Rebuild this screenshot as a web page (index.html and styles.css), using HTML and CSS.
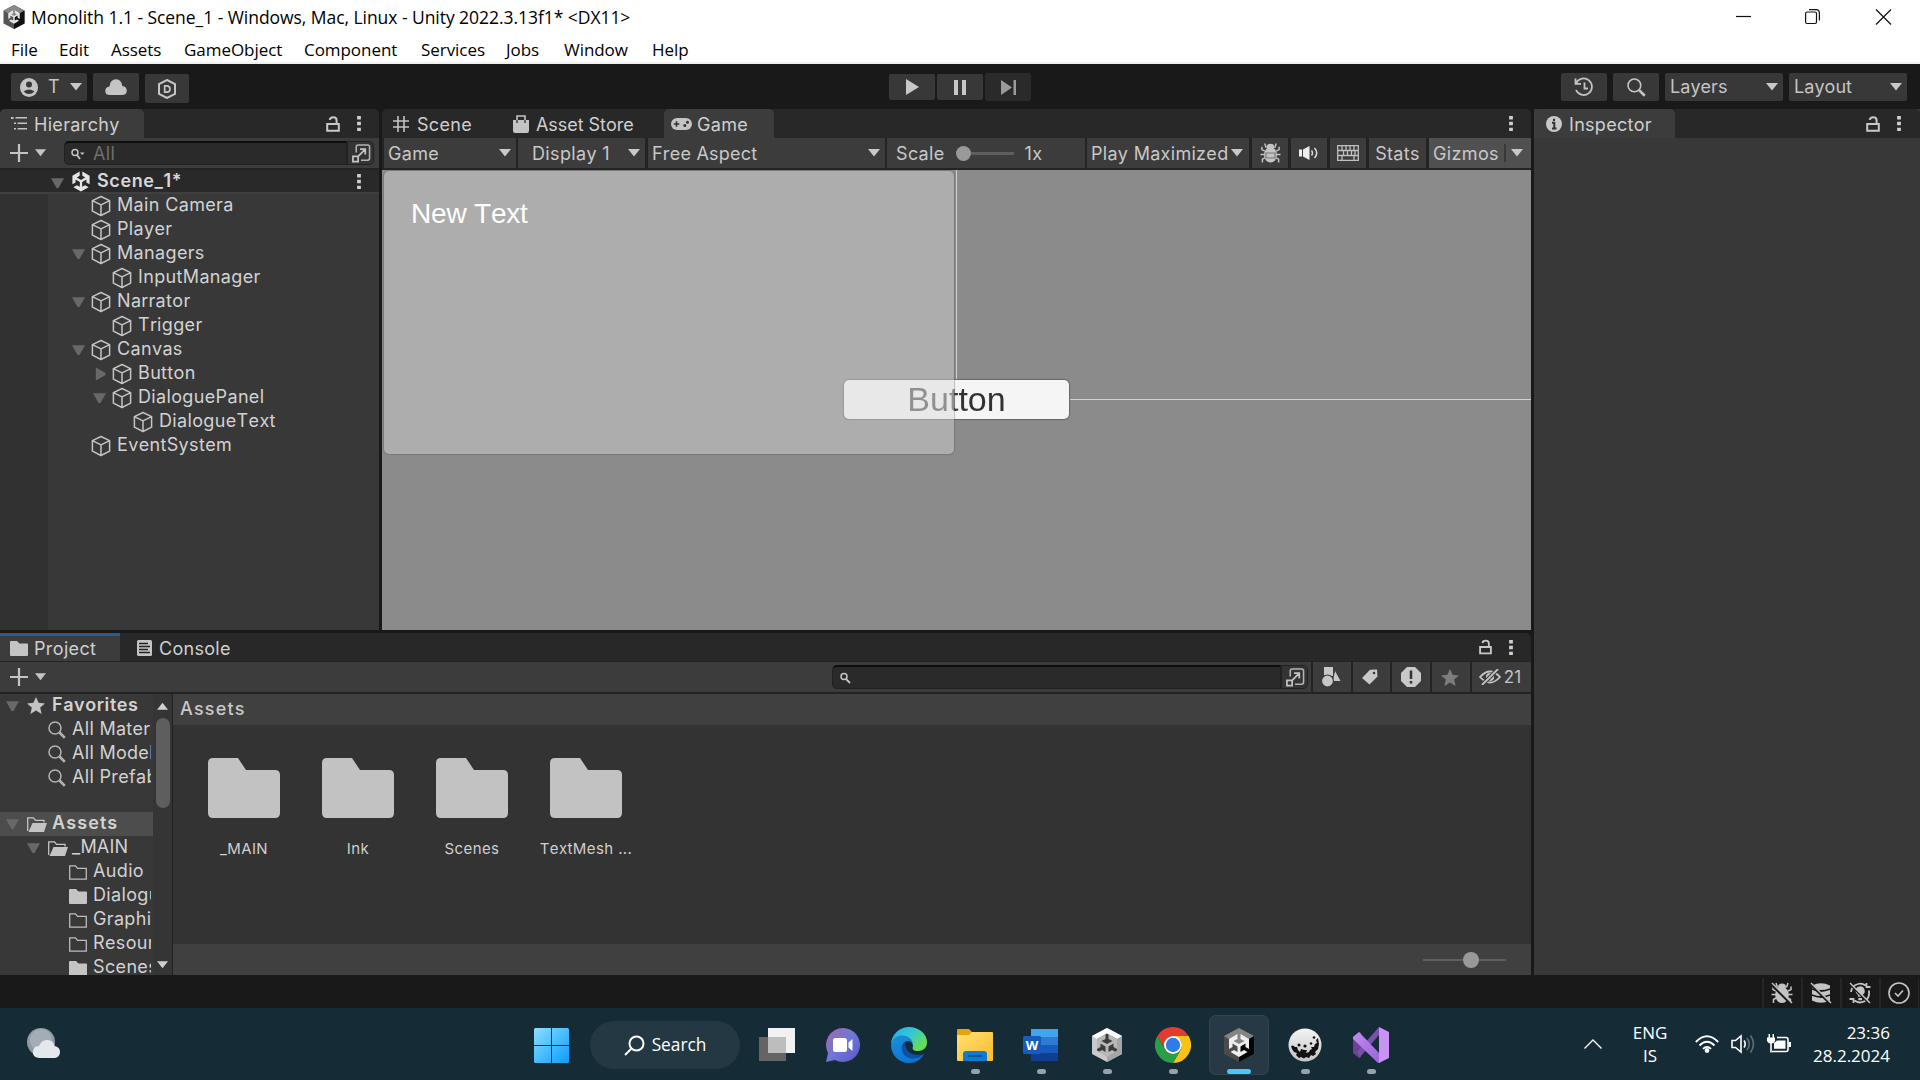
FILE: index.html
```html
<!DOCTYPE html>
<html lang="en">
<head>
<meta charset="utf-8">
<title>Monolith 1.1 - Scene_1</title>
<link rel="stylesheet" href="styles.css">
</head>
<body>
<svg class="defs" width="0" height="0">
  <defs>
    <linearGradient id="gWin" x1="0" y1="0" x2="1" y2="1"><stop offset="0" stop-color="#8be0ff"/><stop offset="1" stop-color="#0a9bff"/></linearGradient>
    <linearGradient id="gChat" x1="0" y1="0" x2="1" y2="1"><stop offset="0" stop-color="#a06aa8"/><stop offset=".5" stop-color="#6f78d8"/><stop offset="1" stop-color="#5b50c8"/></linearGradient>
    <linearGradient id="gEdgeA" x1="0" y1="0" x2="1" y2=".6"><stop offset="0" stop-color="#2aa8e8"/><stop offset=".5" stop-color="#33c5d8"/><stop offset="1" stop-color="#66e052"/></linearGradient>
    <linearGradient id="gEdgeB" x1="0" y1="0" x2=".6" y2="1"><stop offset="0" stop-color="#1b8fd8"/><stop offset="1" stop-color="#0a74d4"/></linearGradient>
    <linearGradient id="gFold" x1="0" y1="0" x2="1" y2="1"><stop offset="0" stop-color="#ffdf78"/><stop offset="1" stop-color="#fdbb27"/></linearGradient>
    <linearGradient id="gVs" x1="0" y1="0" x2="1" y2="1"><stop offset="0" stop-color="#c08cf0"/><stop offset="1" stop-color="#9a63d8"/></linearGradient>
    <linearGradient id="gBall" x1="0" y1="0" x2="0" y2="1"><stop offset="0" stop-color="#f4f4f4"/><stop offset="1" stop-color="#c4c4c4"/></linearGradient>
  </defs>
  <symbol id="cube" viewBox="0 0 20 22"><path d="M10 1.5 18.6 5.6V16.2L10 20.5 1.4 16.2V5.6ZM1.4 5.6 10 9.8 18.6 5.6M10 9.8V20.5" fill="none" stroke="#c4c4c4" stroke-width="1.5" stroke-linejoin="round"/></symbol>
  <symbol id="unity" viewBox="0 0 20 22"><path d="M8.6 0.5V5L5.6 6.8 10 9.4 14.4 6.8 11.4 5V0.5L19 5V14L15.7 12V8.8L11.2 11.5V16.6L14.3 14.8 18 17 10 21.5 2 17 5.7 14.8 8.8 16.6V11.5L4.3 8.8V12L1 14V5Z" fill="#e6e6e6"/></symbol>
  <symbol id="lock" viewBox="0 0 14 16"><path d="M1.2 8H12.8V14.8H1.2ZM10.6 8V4.2Q10.6 1.2 7.3 1.2 4 1.2 3.8 3.8" fill="none" stroke="#c8c8c8" stroke-width="2"/></symbol>
  <symbol id="kebab" viewBox="0 0 4 16"><path d="M0 0H4V3.6H0ZM0 6.2H4V9.8H0ZM0 12.4H4V16H0Z" fill="#cfcfcf"/></symbol>
  <symbol id="down" viewBox="0 0 12 8"><path d="M0 0H12L6 7.5Z" fill="currentColor"/></symbol>
  <symbol id="plus" viewBox="0 0 18 18"><path d="M9 0V18M0 9H18" stroke="#c4c4c4" stroke-width="2.2"/></symbol>
  <symbol id="mag" viewBox="0 0 18 18"><circle cx="7" cy="7" r="6" fill="none" stroke="currentColor" stroke-width="1.5"/><path d="M11.5 11.5 16.8 16.8" stroke="currentColor" stroke-width="2.6"/></symbol>
  <symbol id="open" viewBox="0 0 20 20"><path d="M5 9V3Q5 1 7 1H17Q19 1 19 3V15Q19 17 17 17H10" fill="none" stroke="#b4b4b4" stroke-width="1.6"/><path d="M1.5 13H7V18.5H1.5ZM7 13 14 6M9 5.5H14.5V11" fill="none" stroke="#c4c4c4" stroke-width="1.8"/></symbol>
  <symbol id="bug" viewBox="0 0 22 22"><path d="M6.5 5.5 5 1M15.5 5.5 17 1M5 9 2 7.5V4.5M17 9 20 7.5V4.5M5 12.5H.5M17 12.5H21.500M5 16 2.500 17.500V21M17 16 19.500 17.500V21" stroke="#c4c4c4" stroke-width="1.5" fill="none"/><ellipse cx="11" cy="13" rx="6.800" ry="8" fill="#c4c4c4"/><ellipse cx="11" cy="5" rx="4" ry="3.600" fill="#c4c4c4"/></symbol>
  <symbol id="fsolid" viewBox="0 0 18 15"><path d="M0 1Q0 0 1 0H7L9.500 2.500H17Q18 2.500 18 3.500V14Q18 15 17 15H1Q0 15 0 14Z" fill="#c4c4c4"/></symbol>
  <symbol id="fline" viewBox="0 0 18 15"><path d="M.7.8H6.500L8.500 3.300H17.300V14.200H.7Z" fill="none" stroke="#bcbcbc" stroke-width="1.300"/></symbol>
  <symbol id="fopen" viewBox="0 0 20 15"><path d="M.7 14V.8H6.500L8.500 3.300H17V5.500" fill="none" stroke="#c4c4c4" stroke-width="1.300"/><path d="M5.500 6H20L17 15H1.500Z" fill="#c4c4c4"/></symbol>
  <symbol id="bigfolder" viewBox="0 0 72 60"><path d="M0 5Q0 0 5 0H30L38 12H67Q72 12 72 17V55Q72 60 67 60H5Q0 60 0 55Z" fill="#c2c2c2"/></symbol>
  <symbol id="star" viewBox="0 0 18 17"><path d="M9 0 11.600 5.800 18 6.400 13.200 10.600 14.600 17 9 13.600 3.400 17 4.800 10.600 0 6.400 6.400 5.800Z" fill="currentColor"/></symbol>
</svg>

<header class="titlebar">
  <svg class="t-logo" viewBox="0 0 22 24"><path d="M11 0 21.500 5.500V18.500L11 24 .5 18.500V5.500Z" fill="#555"/><path d="M11 0 .5 5.500 11 12 21.500 5.500Z" fill="#888"/><path d="M21.500 5.500V18.500L11 24V12Z" fill="#111"/><use href="#unity" x="4.500" y="5" width="13" height="14"/></svg>
  <span class="t-title">Monolith 1.1 - Scene_1 - Windows, Mac, Linux - Unity 2022.3.13f1* &lt;DX11&gt;</span>
  <svg class="t-win" viewBox="0 0 160 18" fill="none" stroke="#111" stroke-width="1.200"><path d="M0 8.500H15"/><path d="M69.600 5.500Q69.600 4 71.100 4H79Q80.500 4 80.500 5.500V14Q80.500 15.500 79 15.500H71.100Q69.600 15.500 69.600 14ZM73 1.600H80Q83.400 1.600 83.400 5V12.500"/><path d="M140 1.500 155 16.500M155 1.500 140 16.500"/></svg>
</header>
<nav class="menubar"><span>File</span><span>Edit</span><span>Assets</span><span>GameObject</span><span>Component</span><span>Services</span><span>Jobs</span><span>Window</span><span>Help</span></nav>

<section class="toolbar">
  <div class="tb acct"><svg width="18" height="19" viewBox="0 0 18 19"><ellipse cx="9" cy="9.500" rx="9" ry="9.500" fill="#c4c4c4"/><circle cx="9" cy="6.500" r="3" fill="#383838"/><path d="M3.500 13.500Q9 9.500 14.500 13.500 9 18.500 3.500 13.500Z" fill="#383838"/></svg><span>T</span><svg class="car"><use href="#down"/></svg></div>
  <div class="tb cloud"><svg width="22" height="16" viewBox="0 0 22 16"><path d="M5 16Q0 16 .3 11.500 .6 8 4.500 7.500 5 .5 11 .3 16.500.4 17.300 7 21.800 7.800 21.800 11.700 21.600 16 17 16Z" fill="#c4c4c4"/></svg></div>
  <div class="tb dee"><svg width="18" height="20" viewBox="0 0 18 20"><path d="M9 1 17 5V15L9 19 1 15V5Z" fill="none" stroke="#c4c4c4" stroke-width="2"/><path d="M6.700 6.800H9Q12 7 12 10T9 13.200H6.700Z" fill="none" stroke="#c4c4c4" stroke-width="1.700"/></svg></div>
  <div class="tb play"><svg width="14" height="16" viewBox="0 0 14 16"><path d="M1 0 14 8 1 16Z" fill="#c8c8c8"/></svg></div>
  <div class="tb pause"><svg width="12" height="15"><path d="M0 0H4V15H0ZM8 0H12V15H8Z" fill="#c8c8c8"/></svg></div>
  <div class="tb step"><svg width="16" height="15"><path d="M0 0 11 7.500 0 15ZM12.500 0H15V15H12.500Z" fill="#9a9a9a"/></svg></div>
  <div class="tb hist"><svg width="20" height="20" viewBox="0 0 20 20" fill="none" stroke="#c4c4c4" stroke-width="1.800"><path d="M2.200 6A8.300 8.300 0 1 1 2 13M1.500 1.500V6.800H7M10.500 5.500V11.500H14"/></svg></div>
  <div class="tb find"><svg width="19" height="19"><use href="#mag"/></svg></div>
  <div class="tb drop"><span>Layers</span><svg class="car"><use href="#down"/></svg></div>
  <div class="tb drop"><span>Layout</span><svg class="car"><use href="#down"/></svg></div>
</section>

<main class="workspace">
  <div class="left">
    <div class="top">
      <section class="hier">
        <div class="tabs">
          <div class="tab on t-hier"><svg width="16" height="13" viewBox="0 0 16 13" fill="#c4c4c4"><path d="M0 0H2.500V2H0ZM4.500 0H16V1.600H4.500ZM3 5.500H5V7H3ZM6.500 5.500H16V7H6.500ZM3 11H5V12.600H3ZM6.500 11H16V12.600H6.500Z"/></svg><span>Hierarchy</span></div>
          <svg class="lk"><use href="#lock"/></svg><svg class="kb"><use href="#kebab"/></svg>
        </div>
        <div class="bar hbar">
          <svg class="pl"><use href="#plus"/></svg><svg class="sc"><use href="#down"/></svg>
          <div class="field hfield"><svg width="14" height="12" viewBox="0 0 14 12"><circle cx="4" cy="4.500" r="3" fill="none" stroke="#c4c4c4" stroke-width="1.500"/><path d="M6 7 9 11" stroke="#c4c4c4" stroke-width="1.800"/><path d="M9 4.500H13.500L11.200 7Z" fill="#c4c4c4"/></svg><span>All</span></div>
          <div class="opn"><svg><use href="#open"/></svg></div>
        </div>
        <div class="scene"><svg class="tri"><use href="#down"/></svg><svg class="ul"><use href="#unity"/></svg><b>Scene_1*</b><svg class="kb"><use href="#kebab"/></svg></div>
        <div class="tree">
          <div class="row l1"><i></i><svg class="cb"><use href="#cube"/></svg>Main Camera</div>
          <div class="row l1"><i></i><svg class="cb"><use href="#cube"/></svg>Player</div>
          <div class="row l1"><svg class="tri"><use href="#down"/></svg><svg class="cb"><use href="#cube"/></svg>Managers</div>
          <div class="row l2"><i></i><svg class="cb"><use href="#cube"/></svg>InputManager</div>
          <div class="row l1"><svg class="tri"><use href="#down"/></svg><svg class="cb"><use href="#cube"/></svg>Narrator</div>
          <div class="row l2"><i></i><svg class="cb"><use href="#cube"/></svg>Trigger</div>
          <div class="row l1"><svg class="tri"><use href="#down"/></svg><svg class="cb"><use href="#cube"/></svg>Canvas</div>
          <div class="row l2"><svg class="tri shut"><use href="#down"/></svg><svg class="cb"><use href="#cube"/></svg>Button</div>
          <div class="row l2"><svg class="tri"><use href="#down"/></svg><svg class="cb"><use href="#cube"/></svg>DialoguePanel</div>
          <div class="row l3"><i></i><svg class="cb"><use href="#cube"/></svg>DialogueText</div>
          <div class="row l1"><i></i><svg class="cb"><use href="#cube"/></svg>EventSystem</div>
        </div>
      </section>

      <section class="game">
        <div class="tabs">
          <div class="tab g1"><svg width="16" height="16" viewBox="0 0 16 16"><path d="M5 0V16M11 0V16M0 5H16M0 11H16" stroke="#c4c4c4" stroke-width="1.600"/></svg><span>Scene</span></div>
          <div class="tab g2"><svg width="16" height="18" viewBox="0 0 16 18"><path d="M0 5H16V15.500Q16 18 14 18H2Q0 18 0 15.500Z" fill="#c4c4c4"/><path d="M4 8V1H12V8" fill="none" stroke="#c4c4c4" stroke-width="1.600"/><path d="M4 5V8M12 5V8" stroke="#444" stroke-width="1.500"/></svg><span>Asset Store</span></div>
          <div class="tab on g3"><svg width="21" height="12" viewBox="0 0 21 12"><rect width="21" height="12" rx="6" fill="#c4c4c4"/><path d="M5.500 3.200V8.800M2.700 6H8.300" stroke="#333" stroke-width="1.600"/><circle cx="16.500" cy="4.200" r="1.500" fill="#333"/><circle cx="13.800" cy="7.600" r="1.500" fill="#333"/></svg><span>Game</span></div>
          <svg class="kb"><use href="#kebab"/></svg>
        </div>
        <div class="gbar">
          <div class="gi a"><span>Game</span><svg class="car"><use href="#down"/></svg></div>
          <div class="gi b"><span>Display 1</span><svg class="car"><use href="#down"/></svg></div>
          <div class="gi c"><span>Free Aspect</span><svg class="car"><use href="#down"/></svg></div>
          <div class="gi d"><span>Scale</span><i class="knob"></i><i class="rail"></i><span>1x</span></div>
          <div class="gi e"><span>Play Maximized</span><svg class="car"><use href="#down"/></svg></div>
          <div class="gi q"><svg width="21" height="22"><use href="#bug"/><path d="M6 11H15V16H6Z" fill="none" stroke="#777" stroke-width="1.200"/></svg></div>
          <div class="gi q"><svg width="20" height="16" viewBox="0 0 20 16"><path d="M0 4.500H3V11.500H0ZM4 4.500 10.500 1V15L4 11.500Z" fill="#eee"/><path d="M12.500 5.500Q14.500 8 12.500 10.500M15.500 3Q20 8 15.500 13" fill="none" stroke="#ddd" stroke-width="1.500"/></svg></div>
          <div class="gi q"><svg width="22" height="16" viewBox="0 0 22 16" fill="none" stroke="#c0c0c0" stroke-width="1.300"><path d="M.7.7H21.300V15.300H.7ZM.7 5.500H21.300M.7 10.500H21.300M5 .7V5.500M9 .7V5.500M13 .7V5.500M17 .7V5.500M6.500 5.500V10.500M10.500 5.500V10.500M14.500 5.500V10.500M18 5.500V10.500M5 10.500V15.300M17 10.500V15.300"/></svg></div>
          <div class="gi s"><span>Stats</span></div>
          <div class="gi z"><span>Gizmos</span><i></i><svg class="car"><use href="#down"/></svg></div>
        </div>
        <div class="view">
          <div class="vline"></div><div class="hline"></div>
          <div class="ubtn"><span>Button</span></div>
          <div class="upanel">New Text</div>
        </div>
      </section>
    </div>

    <section class="project">
      <div class="tabs">
        <div class="tab on p1"><svg width="18" height="15"><use href="#fsolid"/></svg><span>Project</span></div>
        <div class="tab p2"><svg width="15" height="16" viewBox="0 0 15 16"><rect width="15" height="16" rx="1.500" fill="#c4c4c4"/><path d="M2 3.500H11M2 6.500H13M2 9.500H11M2 12.500H13" stroke="#222" stroke-width="1.300"/></svg><span>Console</span></div>
        <svg class="lk"><use href="#lock"/></svg><svg class="kb"><use href="#kebab"/></svg>
      </div>
      <div class="bar pbar">
        <svg class="pl"><use href="#plus"/></svg><svg class="sc"><use href="#down"/></svg>
        <div class="field pfield"><svg width="11" height="12" viewBox="0 0 11 12"><circle cx="4" cy="4.500" r="3" fill="none" stroke="#c4c4c4" stroke-width="1.500"/><path d="M6 7 10 11" stroke="#c4c4c4" stroke-width="1.800"/></svg></div>
        <div class="opn"><svg><use href="#open"/></svg></div>
        <div class="pi f1"><svg width="19" height="20" viewBox="0 0 19 20" fill="#c8c8c8"><path d="M2 0H11V9H2ZM13 4 18.500 14H11Z"/><circle cx="5.500" cy="14" r="6" stroke="#3c3c3c" stroke-width="1.200"/></svg></div>
        <div class="pi f2"><svg width="16" height="16" viewBox="0 0 16 16"><path d="M0 9 8 .8 15 .5 15.500 7.500 7.500 15.500Z" fill="#c8c8c8"/><circle cx="12" cy="4" r="1.300" fill="#3c3c3c"/></svg></div>
        <div class="pi f3"><svg width="20" height="20" viewBox="0 0 20 20"><path d="M6 0H14L20 6V14L14 20H6L0 14V6Z" fill="#c8c8c8"/><path d="M10 3.500V12M10 14V16.500" stroke="#333" stroke-width="2.500"/></svg></div>
        <div class="pi f4"><svg width="18" height="17"><use href="#star"/></svg></div>
        <div class="pi f5"><svg width="22" height="16" viewBox="0 0 22 16"><path d="M1 8Q11-3 21 8 11 19 1 8Z" fill="none" stroke="#c4c4c4" stroke-width="1.800"/><circle cx="11" cy="8" r="4" fill="#c4c4c4"/><path d="M3 16 19 0" stroke="#3c3c3c" stroke-width="4"/><path d="M3 16 19 0" stroke="#c4c4c4" stroke-width="1.800"/></svg><span>21</span></div>
      </div>
      <div class="pbody">
        <div class="ptree">
          <div class="row p0"><svg class="tri"><use href="#down"/></svg><svg class="st"><use href="#star"/></svg><b>Favorites</b></div>
          <div class="row q1"><svg class="mg"><use href="#mag"/></svg>All Materials</div>
          <div class="row q1"><svg class="mg"><use href="#mag"/></svg>All Models</div>
          <div class="row q1"><svg class="mg"><use href="#mag"/></svg>All Prefabs</div>
          <div class="row p0 sel"><svg class="tri"><use href="#down"/></svg><svg class="fo"><use href="#fopen"/></svg><b>Assets</b></div>
          <div class="row q0"><svg class="tri"><use href="#down"/></svg><svg class="fo"><use href="#fopen"/></svg>_MAIN</div>
          <div class="row q2"><svg class="fi"><use href="#fline"/></svg>Audio</div>
          <div class="row q2"><svg class="fi"><use href="#fsolid"/></svg>Dialogue</div>
          <div class="row q2"><svg class="fi"><use href="#fline"/></svg>Graphics</div>
          <div class="row q2"><svg class="fi"><use href="#fline"/></svg>Resources</div>
          <div class="row q2"><svg class="fi"><use href="#fsolid"/></svg>Scenes</div>
        </div>
        <div class="scroll"><svg class="up"><use href="#down"/></svg><i></i><svg class="dn"><use href="#down"/></svg></div>
        <div class="assets">
          <div class="crumb">Assets</div>
          <div class="grid">
            <div><svg><use href="#bigfolder"/></svg><span>_MAIN</span></div>
            <div><svg><use href="#bigfolder"/></svg><span>Ink</span></div>
            <div><svg><use href="#bigfolder"/></svg><span>Scenes</span></div>
            <div><svg><use href="#bigfolder"/></svg><span>TextMesh ...</span></div>
          </div>
          <div class="zoombar"><i></i><b></b><i></i></div>
        </div>
      </div>
    </section>
  </div>

  <section class="insp">
    <div class="tabs">
      <div class="tab on i1"><svg width="16" height="16" viewBox="0 0 16 16"><circle cx="8" cy="8" r="8" fill="#c8c8c8"/><path d="M8 2.800V5M6 6.800H8.300V12.500M6 12.500H10.500" stroke="#333" stroke-width="2" fill="none"/></svg><span>Inspector</span></div>
      <svg class="lk"><use href="#lock"/></svg><svg class="kb"><use href="#kebab"/></svg>
    </div>
  </section>
</main>

<div class="status">
  <div><svg width="22" height="22"><use href="#bug"/><path d="M1 3 21 23" stroke="#191919" stroke-width="2.500"/><path d="M1 1 21 21" stroke="#c4c4c4" stroke-width="1.500"/></svg></div>
  <div><svg width="22" height="22" viewBox="0 0 22 22"><path d="M2 3.500Q11-1 20 3.500V18.500Q11 23 2 18.500Z" fill="#c4c4c4"/><path d="M2 7Q11 11 20 7M2 13Q11 17 20 13" stroke="#191919" stroke-width="1.800" fill="none"/><path d="M2 3.500 22 23.500" stroke="#191919" stroke-width="2.500"/><path d="M1 1 21 21" stroke="#c4c4c4" stroke-width="1.500"/></svg></div>
  <div><svg width="22" height="22" viewBox="0 0 22 22"><path d="M2 10A9.300 9.300 0 0 1 9 2Q13 .8 16.500 3.500M20 8.500V13A9.300 9.300 0 0 1 13 20.200Q9 21.200 5.500 18.500M17.500 1V5H21.500M.5 17H4.500V21" stroke="#c4c4c4" stroke-width="1.800" fill="none"/><path d="M6.500 9A4.600 4.600 0 1 1 13.300 13V14.800H9V13Q6.500 11.500 6.500 9ZM9.300 16H13V18.300H9.300Z" fill="#c4c4c4"/><path d="M2 3.600 20 21.600" stroke="#191919" stroke-width="1.600"/><path d="M1 1 21 21" stroke="#c4c4c4" stroke-width="1.500"/></svg></div>
  <div><svg width="22" height="22" viewBox="0 0 22 22" fill="none" stroke="#c4c4c4" stroke-width="1.600"><circle cx="11" cy="11" r="10"/><path d="M7 11 10 14 15 8.500"/></svg></div>
</div>

<footer class="taskbar">
  <svg class="weather" width="36" height="34" viewBox="0 0 36 34"><circle cx="15" cy="15" r="14" fill="#8f9aa3"/><circle cx="15" cy="13" r="11" fill="#a4adb5"/><path d="M13 31Q6 30 7 24 8 19 13 19 16 12 22 13 28 14 28.500 19 34 20 34 25 34 30 29 31Z" fill="#e4e8ec"/></svg>
  <div class="apps">
    <svg class="start" width="35" height="35" viewBox="0 0 35 35" fill="url(#gWin)"><path d="M1.500 0H17V17H0V1.500Q0 0 1.500 0ZM18 0H33.500Q35 0 35 1.500V17H18ZM0 18H17V35H1.500Q0 35 0 33.500ZM18 18H35V33.500Q35 35 33.500 35H18Z"/></svg>
    <div class="pill"><svg width="21" height="21" viewBox="0 0 21 21" fill="none" stroke="#fff" stroke-width="2"><circle cx="12.500" cy="8.500" r="7"/><path d="M7.500 13.500 1 20"/></svg><span>Search</span></div>
    <div class="app"><svg viewBox="0 0 36 36"><path d="M9 1H36V26H9Z" fill="#f1f1f1"/><path d="M0 10H27V34H0Z" fill="#646464"/><path d="M9 10H27V26H9Z" fill="#bdbdbd"/></svg></div>
    <div class="app"><svg viewBox="0 0 36 36"><path d="M18 1A17 17 0 1 1 10 33L1 35 3 26A17 17 0 0 1 18 1Z" fill="url(#gChat)"/><rect x="8" y="11" width="14" height="14" rx="2.500" fill="#fff"/><path d="M23.500 15.500 27.500 12V24L23.500 20.500Z" fill="#fff"/></svg></div>
    <div class="app"><svg viewBox="0 0 36 36"><path d="M0 18C0 8 8 0 18 0S36 7 36 15C36 21 32 24 27 24 22 24 21 22 22 19 22 12 14 9 7 11 2 13 0 16 0 18Z" fill="url(#gEdgeA)"/><path d="M0 18C1 11 6 8.500 11 8.500 18 8.500 22 13 22 18 21 14 17 13 14 15 9 18 10 27 17 30 23 33 29 30 33 27 30 33 24 36 18 36 8 36 0 28 0 18Z" fill="url(#gEdgeB)"/><path d="M14 15C9 19 10 28 17 30.500 23 33 30 30 33 27 28 29 14 29 14 15Z" fill="#0f4fa0"/></svg></div>
    <div class="app run"><svg viewBox="0 0 36 36"><path d="M0 8V3Q0 2 1 2H12L15 5V9Z" fill="#e5a40a"/><path d="M0 8H12L15 5H35Q36 5 36 6V33Q36 34 35 34H1Q0 34 0 33Z" fill="url(#gFold)"/><path d="M6 34V27Q6 24 9 24H27Q30 24 30 27V34Z" fill="#0e7ad0"/><path d="M11 29H25" stroke="#0b4f94" stroke-width="1.600"/></svg></div>
    <div class="app run"><svg viewBox="0 0 36 36"><path d="M8 2H35V10H8Z" fill="#41a5ee"/><path d="M8 10H35V18H8Z" fill="#2b7cd3"/><path d="M8 18H35V26H8Z" fill="#185abd"/><path d="M8 26H35V34H8Z" fill="#103f91"/><rect y="9" width="18" height="18" rx="1.500" fill="#185abd"/><text x="9" y="23" text-anchor="middle" class="wtxt">W</text></svg></div>
    <div class="app run"><svg viewBox="0 0 36 36"><path d="M18 1 33 9V27L18 35 3 27V9Z" fill="#c9c9c9"/><path d="M18 1 3 9 18 18 33 9Z" fill="#fff"/><path d="M33 9V27L18 35V18Z" fill="#a5a5a5"/><path d="M18 6.500 28 12V23.500L18 29 8 23.500V12Z" fill="#3c3c3c"/><path d="M16.500 7V12L12.500 14 18 17 23.500 14 19.500 12V7L28 12V22L24.500 20V16.500L19.500 19.500V25L23 23 26.500 25 18 30 9.500 25 13 23 16.500 25V19.500L11.500 16.500V20L8 22V12Z" fill="#b8b8b8"/></svg></div>
    <div class="app run"><svg viewBox="0 0 36 36"><path d="M2.400 9A18 18 0 0 1 33.600 9H18A9 9 0 0 0 10.200 13.500L10.200 22.500Z" fill="#e33b2e"/><path d="M33.600 9A18 18 0 0 1 18 36L25.800 22.500A9 9 0 0 0 25.800 13.500L18 9Z" fill="#fbc116"/><path d="M2.400 9 10.200 22.500A9 9 0 0 0 25.800 22.500L18 36A18 18 0 0 1 2.400 9Z" fill="#2a9d47"/><circle cx="18" cy="18" r="9" fill="#fff"/><circle cx="18" cy="18" r="7.200" fill="#2f7be8"/></svg></div>
    <div class="app run cur"><svg viewBox="0 0 36 36"><path d="M18 1 33 9V27L18 35 3 27V9Z" fill="#4b4b4b"/><path d="M18 1 3 9 18 18 33 9Z" fill="#858585"/><path d="M33 9V27L18 35V18Z" fill="#050505"/><path d="M16.500 7V12L12.500 14 18 17 23.500 14 19.500 12V7L28 12V22L24.500 20V16.500L19.500 19.500V25L23 23 26.500 25 18 30 9.500 25 13 23 16.500 25V19.500L11.500 16.500V20L8 22V12Z" fill="#eee"/></svg></div>
    <div class="app run"><svg viewBox="0 0 36 36"><circle cx="18" cy="18" r="16.500" fill="url(#gBall)"/><path d="M4 19 6 18.500 8 20 10 20 11 23 13 25 14 22 17 23 20 23 19 26 22 25 23 23 25 22 24 20 27 20 28 17 30 16 29 13 31 11 32 17 31 22 28 25 29 27 26 29 24 28 22 31 19 30 17 31.500 14 30 12 31 9 28 10 26 7 25 5 22Z" fill="#111"/><circle cx="27" cy="10.500" r="1.300" fill="#111"/><circle cx="12" cy="18" r="1.500" fill="#111"/><circle cx="18" cy="19" r="1.600" fill="#111"/><circle cx="24" cy="16.500" r="1.200" fill="#111"/></svg></div>
    <div class="app run"><svg viewBox="0 0 36 36"><path d="M0 10 6 5 8 6V30L6 31 0 26Z" fill="#6d4296"/><path d="M7 30 26 8V0L18 9 4 25Z" fill="#7b4fb0"/><path d="M0 10 6 5 27 27V36H25L0 12Z" fill="url(#gVs)"/><path d="M26 0 36 5V31L26 36Z" fill="#c993f6"/></svg></div>
  </div>
  <div class="tray">
    <svg class="chev" width="18" height="10" fill="none" stroke="#fff" stroke-width="1.400"><path d="M.5 9.500 9 1 17.500 9.500"/></svg>
    <div class="lang">ENG<br>IS</div>
    <svg class="wifi" width="24" height="18" viewBox="0 0 24 18" fill="none" stroke="#fff" stroke-width="1.800"><path d="M.8 7Q12-4.500 23.200 7M4.500 10.500Q12 3 19.500 10.500M8 13.800Q12 9.800 16 13.800"/><circle cx="12" cy="15.500" r="1.500" fill="#fff"/></svg>
    <svg class="vol" width="24" height="20" viewBox="0 0 24 20" fill="none" stroke="#fff" stroke-width="1.600"><path d="M1 6.500H4.500L10 2V18L4.500 13.500H1ZM13 6.500Q15.500 10 13 13.500"/><path d="M16 4Q20.500 10 16 16M19.500 1.500Q25.500 10 19.500 18.500" stroke="#5d7079"/></svg>
    <svg class="bat" width="24" height="20" viewBox="0 0 24 20" fill="none" stroke="#fff" stroke-width="1.600"><path d="M10 3.500H19Q21 3.500 21 5.500V15.500Q21 17.500 19 17.500H5"/><path d="M10 6.500H18.500V14.800H7V9Z M21.500 8H24V13H21.500ZM0 3.500H8V7Q7 9.500 4 9.500T0 7ZM1.500 0H3V4H1.500ZM5.500 0H7V4H5.500Z" fill="#fff" stroke="none"/><path d="M4 9V18.500"/></svg>
    <div class="clock">23:36<br>28.2.2024</div>
  </div>
</footer>
</body>
</html>
```
FILE: styles.css
```css
* { box-sizing: border-box; }
body { margin: 0; width: 1920px; height: 1080px; overflow: hidden; display: flex; flex-direction: column; background: #191919; color: #cfcfcf; font: 18px/24px Inter, "Liberation Sans", sans-serif; letter-spacing: .35px; font-kerning: none; white-space: nowrap; }
svg { display: block; flex: none; }
i, b { font-style: normal; }
b { font-weight: 600; letter-spacing: .6px; }
.defs { position: absolute; }

.titlebar { height: 36px; flex: none; background: #fff; display: flex; align-items: center; padding-left: 3px; color: #000; }
.t-logo { width: 22px; height: 24px; margin-top: -2px; }
.t-title { margin: -2px 0 0 6px; width: 1705px; font: 17.5px/24px "Open Sans", sans-serif; letter-spacing: -.05px; }
.t-win { width: 160px; height: 18px; margin-top: -3px; }
.menubar { height: 28px; flex: none; background: #fff; border-bottom: 2px solid #f0f0f0; color: #000; display: grid; grid-template-columns: 48px 52px 73px 120px 117px 85px 58px 88px auto; padding-left: 11px; font: 17px/27px "Open Sans", sans-serif; letter-spacing: -.05px; }

.toolbar { height: 45px; flex: none; display: flex; padding-left: 11px; align-items: flex-start; color: #c4c4c4; }
.tb { height: 28px; margin-top: 9px; background: #383838; display: flex; align-items: center; justify-content: center; border-radius: 2px; }
.car { width: 12px; height: 8px; color: #c8c8c8; }
.tb.acct { width: 76px; gap: 10px; justify-content: flex-end; padding-right: 5px; }
.cloud { width: 46px; margin-left: 6px; }
.dee { width: 44px; height: 29px; margin: 10px 700px 0 6px; }
.play, .pause { width: 46px; height: 26px; margin: 10px 2px 0 0; }
.step { width: 46px; background: #2a2a2a; margin-right: 530px; padding-left: 1px; }
.hist, .find { width: 46px; margin-right: 6px; color: #c4c4c4; }
.tb.drop { width: 118px; justify-content: space-between; padding: 0 5px; margin-right: 6px; letter-spacing: .05px; }

.workspace { display: flex; height: 866px; flex: none; gap: 3px; }
.left { width: 1531px; display: flex; flex-direction: column; gap: 3px; }
.top { display: flex; gap: 3px; height: 521px; }
.hier { width: 379px; display: flex; flex-direction: column; }
.tabs { height: 29px; flex: none; background: #282828; border-radius: 5px 5px 0 0; display: flex; align-items: center; letter-spacing: .3px; }
.tab { height: 29px; display: flex; align-items: center; border-radius: 5px 5px 0 0; padding-top: 2px; }
.tab.on { background: #3c3c3c; }
.tab > svg { margin-top: -2px; }
.t-hier { width: 144px; padding-left: 11px; gap: 7px; }
.lk { width: 14px; height: 16px; margin: 0 17px 0 auto; }
.kb { width: 4px; height: 15px; margin-right: 18px; }
.bar { height: 32px; flex: none; background: #3c3c3c; border-bottom: 2px solid #232323; display: flex; align-items: center; padding-left: 10px; }
.pl { width: 18px; height: 18px; }
.sc { width: 11px; height: 8px; margin-left: 7px; color: #c4c4c4; }
.field { height: 24px; background: #2a2a2a; border: 1px solid #212121; border-top: 2px solid #0d0d0d; border-radius: 5px 0 0 5px; display: flex; align-items: center; color: #6f6f6f; }
.hfield { width: 283px; margin-left: 18px; padding-left: 6px; gap: 8px; }
.opn { width: 27px; height: 24px; border: 1px solid #212121; border-radius: 0 5px 5px 0; display: grid; place-items: center; background: #343434; }
.opn svg { width: 20px; height: 19px; }
.scene { height: 24px; flex: none; background: #292929; border-bottom: 2px solid #404040; display: flex; align-items: center; padding-left: 51px; }
.tri { width: 13px; height: 12px; color: #686868; margin-top: 1px; }
.tri use { transform: scaleY(1.4); }
.shut { transform: rotate(-90deg); margin-top: 2px; }
.ul { width: 20px; height: 21px; margin-left: 7px; }
.scene b { margin-left: 6px; color: #d8d8d8; }
.scene .kb { margin-left: auto; }
.tree { flex: 1; background: linear-gradient(90deg, #313131 48px, #383838 48px); }
.row { height: 24px; line-height: 21px; display: flex; align-items: center; padding-bottom: 3px; color: #d2d2d2; }
.row.l1 { padding-left: 72px; }
.row.l2 { padding-left: 93px; }
.row.l3 { padding-left: 114px; }
.row > i { width: 13px; }
.cb { width: 20px; height: 22px; margin: 3px 6px 0 6px; }

.game { width: 1149px; display: flex; flex-direction: column; }
.g1 { width: 120px; padding-left: 11px; gap: 8px; }
.g2 { width: 162px; padding-left: 11px; gap: 7px; letter-spacing: -.05px; }
.g3 { width: 110px; padding-left: 7px; gap: 5px; }
.game .tabs .kb { margin-left: auto; }
.gbar { height: 32px; flex: none; background: #232323; display: flex; align-items: flex-start; padding-left: 2px; }
.gi { height: 30px; background: #3c3c3c; display: flex; align-items: center; justify-content: space-between; color: #c8c8c8; letter-spacing: .35px; }
.gi span { margin-top: 2px; }
.gi.a { width: 132px; padding: 0 5px 0 4px; margin-right: 2px; }
.gi.b { width: 127px; padding: 0 5px 0 14px; margin-right: 3px; }
.gi.c { width: 237px; padding: 0 5px 0 4px; margin-right: 2px; letter-spacing: .2px; }
.gi.d { width: 198px; padding-left: 9px; justify-content: flex-start; margin-right: 2px; }
.gi.d span:last-child { margin-left: 1px; }
.knob { width: 15px; height: 15px; border-radius: 50%; background: #999; margin-left: 11px; margin-top: 1px; }
.rail { width: 43px; height: 3px; background: #5e5e5e; margin-right: 10px; margin-top: 1px; }
.gi.e { width: 162px; padding: 0 6px 0 4px; margin-right: 3px; letter-spacing: .3px; }
.gi.q { width: 36px; justify-content: center; margin-right: 3px; }
.gi.s { width: 57px; justify-content: center; margin-right: 3px; }
.gi.z { flex: 1; background: #505050; padding: 0 8px 0 4px; }
.gi.z i { width: 2px; height: 18px; background: #383838; }
.view { flex: 1; position: relative; overflow: hidden; background: #8b8b8b; font-family: "Liberation Sans", Arial, sans-serif; letter-spacing: 0; }
.vline { position: absolute; left: 574px; top: 0; width: 1px; height: 210px; background: #d0d0d0; }
.hline { position: absolute; left: 688px; top: 229px; right: 0; height: 1px; background: #d0d0d0; }
.ubtn { position: absolute; left: 462px; top: 210px; width: 225px; height: 39px; border-radius: 5px; background: #f5f5f5; box-shadow: 0 0 1px 1px #666; font-size: 34px; line-height: 39px; text-align: center; }
.ubtn span { display: block; color: transparent; background: linear-gradient(90deg, #575757 110px, #323232 110px); -webkit-background-clip: text; background-clip: text; }
.upanel { position: absolute; left: 2px; top: 1px; width: 570px; height: 283px; border-radius: 5px; background: rgba(216, 216, 216, .443); box-shadow: 0 0 1px 1px rgba(90, 90, 90, .35); color: #fff; font-size: 28px; line-height: 32px; letter-spacing: -.2px; padding: 27px 0 0 27px; }

.project { height: 342px; flex: none; display: flex; flex-direction: column; }
.project .tabs { height: 29px; border-bottom: 1px solid #232323; }
.project .tab { height: 28px; padding-top: 3px; }
.project .tab.p1 { width: 120px; padding: 0 0 0 10px; gap: 6px; border-top: 3px solid #2c5d87; border-radius: 0; }
.project .p1 > svg { margin-top: 0; }
.tab.p2 { padding-left: 17px; gap: 7px; }
.project .tabs .lk { width: 13px; }
.pfield { width: 449px; margin-left: 786px; padding-left: 7px; }
.pi { height: 30px; display: flex; align-items: center; justify-content: center; border-left: 2px solid #232323; color: #7d7d7d; padding-right: 2px; }
.pbar .f1 { width: 40px; margin-left: 3px; }
.f2 { width: 39px; padding-right: 3px; } .f3 { width: 40px; padding-right: 1px; } .f4 { width: 40px; }
.f5 { flex: 1; padding-right: 3px; }
.f5 span { color: #c4c4c4; margin-left: 3px; font-size: 17px; letter-spacing: 0; }
.pbody { height: 281px; display: flex; }
.ptree { width: 153px; background: #383838; overflow: hidden; }
.ptree .row { overflow: hidden; width: 151px; }
.ptree .row.sel { margin-top: 22px; width: 153px; background: #4d4d4d; }
.sel b { letter-spacing: 1.1px; }
.p0 { padding-left: 6px; }
.q0 { padding-left: 27px; letter-spacing: .2px; }
.q1 { padding-left: 48px; letter-spacing: .3px; }
.q2 { padding-left: 69px; }
.st { width: 18px; height: 17px; margin: 2px 7px 0 8px; color: #c4c4c4; }
.mg { width: 18px; height: 18px; margin: 3px 6px 0 0; color: #b4b4b4; }
.fo { width: 20px; height: 15px; margin: 4px 4px 0 8px; }
.sel .fo { margin-right: 5px; }
.fi { width: 18px; height: 15px; margin: 4px 6px 0 0; }
.scroll { width: 20px; background: #353535; border-right: 1px solid #202020; display: flex; flex-direction: column; align-items: center; padding: 8px 0 6px; }
.scroll svg { width: 11px; height: 8px; color: #cfcfcf; }
.scroll .up { transform: rotate(180deg); }
.scroll i { width: 14px; height: 90px; border-radius: 7px; background: #5e5e5e; margin: 8px 0 auto; }
.assets { flex: 1; display: flex; flex-direction: column; background: #333; }
.crumb { height: 31px; background: #404040; padding-left: 7px; font-weight: 500; line-height: 30px; color: #c8c8c8; letter-spacing: 1.2px; }
.grid { flex: 1; display: grid; grid-template-columns: repeat(4, 114px); padding: 33px 0 0 14px; font-size: 15px; letter-spacing: .4px; }
.grid div { display: flex; flex-direction: column; align-items: center; gap: 19px; }
.grid svg { width: 72px; height: 60px; }
.zoombar { height: 31px; background: #404040; display: flex; align-items: center; justify-content: flex-end; padding-right: 25px; }
.zoombar i { width: 40px; height: 2px; background: #5e5e5e; }
.zoombar i:last-child { width: 27px; }
.zoombar b { width: 16px; height: 16px; border-radius: 50%; background: #999; }

.insp { flex: 1; background: #383838; }
.i1 { width: 141px; padding-left: 12px; gap: 7px; }
.insp .kb { margin-right: 19px; }

.status { height: 33px; flex: none; display: flex; justify-content: flex-end; padding: 3px 1px 0 0; }
.status div { width: 39px; border-left: 2px solid #262626; display: grid; place-items: center; padding-right: 2px; }
.status div:last-child { width: 40px; border-right: 1px solid #262626; }

.taskbar { height: 72px; flex: none; background: #152b36; display: flex; align-items: center; color: #fff; font-family: "Open Sans", sans-serif; letter-spacing: 0; }
.weather { margin-left: 26px; }
.apps { display: flex; align-items: center; margin-left: 472px; height: 72px; }
.start { margin-top: 2px; }
.pill { width: 150px; height: 48px; margin: 2px 7px 0 21px; border-radius: 24px; background: #243843; display: flex; align-items: center; justify-content: center; gap: 7px; font-size: 17.3px; }
.app { width: 60px; height: 60px; margin: 2px 6px 0 0; border-radius: 7px; display: flex; flex-direction: column; align-items: center; padding-top: 12px; }
.app svg { width: 36px; height: 36px; }
.run::after { content: ""; width: 9px; height: 5px; margin-top: 6px; border-radius: 3px; background: #98a2a7; }
.cur { background: #263944; box-shadow: inset 0 0 0 1px #31444e; }
.cur::after { width: 24px; background: #4cc2ff; }
.wtxt { font: 700 13px "Open Sans", sans-serif; fill: #fff; letter-spacing: 0; }
.tray { display: flex; align-items: center; margin-left: auto; padding-right: 30px; font-size: 17px; line-height: 23px; }
.lang { width: 50px; margin: 0 20px 0 23px; text-align: center; }
.vol { margin: 0 12px; }
.clock { width: 99px; text-align: right; }
```
